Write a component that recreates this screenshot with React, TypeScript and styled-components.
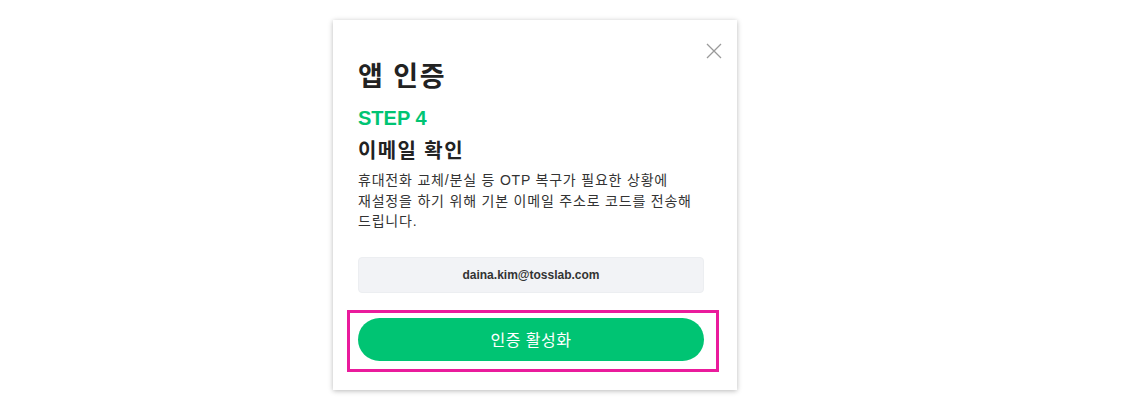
import React from 'react';
import styled, { createGlobalStyle } from 'styled-components';

const GlobalStyle = createGlobalStyle`
  html, body {
    margin: 0;
    padding: 0;
    background: #ffffff;
  }
  body {
    font-family: "Liberation Sans", "Noto Sans CJK KR", Arial, sans-serif;
    color: #222;
  }
`;

const Page = styled.div`
  display: flex;
  align-items: flex-start;
  padding: 20px 0 0 333px;
  height: 419px;
  box-sizing: border-box;
`;

const Card = styled.div`
  position: relative;
  width: 404px;
  box-sizing: border-box;
  padding: 39px 33px 29px 25px;
  background: #fff;
  box-shadow: 0 1px 5px rgba(0, 0, 0, 0.28);
  display: flex;
  flex-direction: column;
`;

const CloseButton = styled.button`
  position: absolute;
  top: 22px;
  right: 14px;
  width: 18px;
  height: 18px;
  padding: 0;
  border: none;
  background: none;
  cursor: pointer;
  display: flex;
  align-items: center;
  justify-content: center;
`;

const Title = styled.h1`
  margin: 0;
  font-size: 27px;
  line-height: 36px;
  letter-spacing: 1.5px;
  font-weight: 700;
  color: #222;
`;

const Step = styled.div`
  margin-top: 11px;
  font-size: 20px;
  line-height: 24px;
  font-weight: 700;
  color: #00c473;
`;

const SubTitle = styled.h2`
  margin: 7px 0 0;
  font-size: 20px;
  line-height: 28px;
  letter-spacing: 1.4px;
  font-weight: 700;
  color: #222;
`;

const Description = styled.p`
  margin: 5px 0 0;
  font-size: 14px;
  line-height: 20.5px;
  letter-spacing: 0.8px;
  word-break: keep-all;
  color: #333;
`;

const EmailBox = styled.div`
  margin-top: 25px;
  height: 36px;
  border-radius: 4px;
  background: #f2f3f6;
  border: 1px solid #eceef1;
  box-sizing: border-box;
  display: flex;
  align-items: center;
  justify-content: center;
  font-size: 12px;
  font-weight: 700;
  color: #333;
`;

const ButtonArea = styled.div`
  position: relative;
  margin-top: 25px;
`;

const Highlight = styled.div`
  position: absolute;
  top: -8px;
  bottom: -11px;
  left: -11px;
  right: -15px;
  border: 3px solid #ea1b9c;
  pointer-events: none;
`;

const PrimaryButton = styled.button`
  display: block;
  width: 100%;
  height: 43px;
  border: none;
  border-radius: 22px;
  background: #00c473;
  color: #fff;
  font-family: inherit;
  font-size: 16px;
  letter-spacing: 0.5px;
  cursor: pointer;
`;

export default function App() {
  return (
    <>
      <GlobalStyle />
      <Page>
        <Card>
          <CloseButton aria-label="닫기">
            <svg width="16" height="16" viewBox="0 0 16 16">
              <path d="M1 1 L15 15 M15 1 L1 15" stroke="#9a9a9a" strokeWidth="1.3" />
            </svg>
          </CloseButton>
          <Title>앱 인증</Title>
          <Step>STEP 4</Step>
          <SubTitle>이메일 확인</SubTitle>
          <Description>
            휴대전화 교체/분실 등 OTP 복구가 필요한 상황에 재설정을 하기 위해 기본 이메일 주소로 코드를 전송해
            드립니다.
          </Description>
          <EmailBox>daina.kim@tosslab.com</EmailBox>
          <ButtonArea>
            <Highlight />
            <PrimaryButton>인증 활성화</PrimaryButton>
          </ButtonArea>
        </Card>
      </Page>
    </>
  );
}
